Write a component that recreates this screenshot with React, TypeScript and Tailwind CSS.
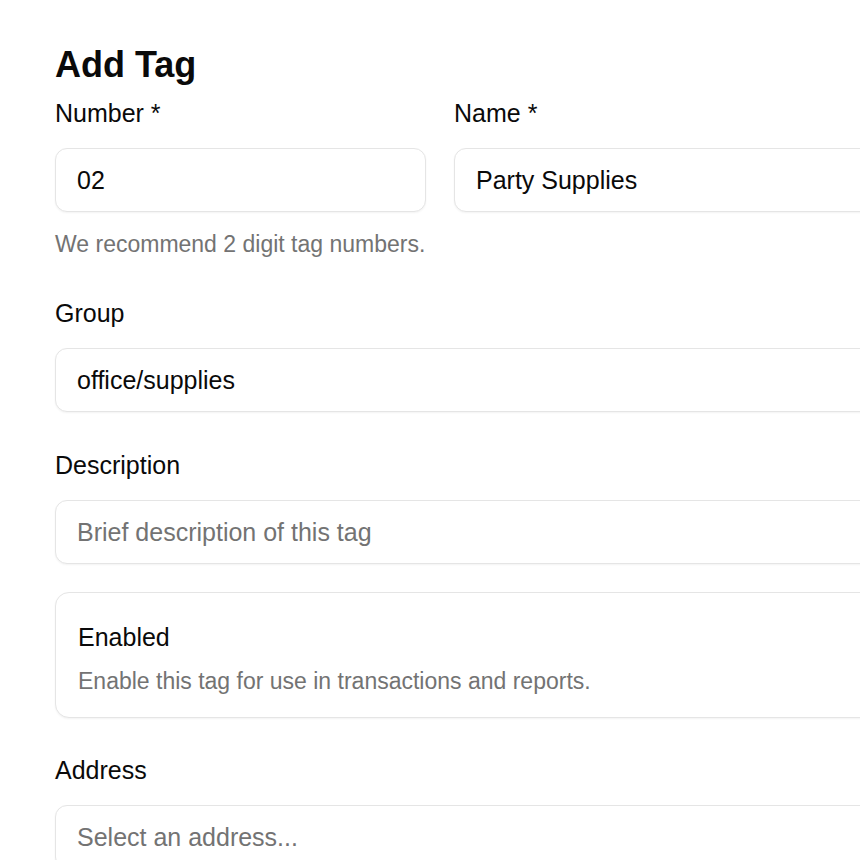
import React from "react";

const font = { fontFamily: '"Liberation Sans", Arial, sans-serif' };

const inputCls =
  "block w-full h-[64px] rounded-[12px] border border-[#e5e5e5] bg-white px-[21px] text-[25px] text-[#0a0a0a] placeholder:text-[#737373] shadow-[0_1px_2px_rgba(0,0,0,0.05)] outline-none";

function Label({ children }: { children: React.ReactNode }) {
  return <label className="block text-[25px] leading-[32px] text-[#0a0a0a]">{children}</label>;
}

export default function App() {
  return (
    <div className="w-[860px] h-[860px] overflow-hidden bg-white" style={font}>
      <div className="w-[1300px] pl-[55px] pt-[45px] flex flex-col">
        <h1 className="text-[36px] leading-[40px] font-bold text-[#0a0a0a]">Add Tag</h1>

        <div className="mt-[12px] grid grid-cols-[371px_1fr] gap-x-[28px]">
          <div>
            <Label>Number *</Label>
            <div className="mt-[19px]">
              <input className={inputCls} defaultValue="02" />
            </div>
            <p className="mt-[18px] text-[23px] leading-[28px] text-[#737373]">
              We recommend 2 digit tag numbers.
            </p>
          </div>
          <div>
            <Label>Name *</Label>
            <div className="mt-[19px]">
              <input className={inputCls} defaultValue="Party Supplies" />
            </div>
          </div>
        </div>

        <div className="mt-[39px]">
          <Label>Group</Label>
          <div className="mt-[19px]">
            <input className={inputCls} defaultValue="office/supplies" />
          </div>
        </div>

        <div className="mt-[37px]">
          <Label>Description</Label>
          <div className="mt-[19px]">
            <input className={inputCls} placeholder="Brief description of this tag" />
          </div>
        </div>

        <div className="mt-[28px] rounded-[14px] border border-[#e5e5e5] bg-white px-[22px] pt-[28px] pb-[22px] shadow-[0_1px_2px_rgba(0,0,0,0.05)]">
          <div className="text-[25px] leading-[32px] text-[#0a0a0a]">Enabled</div>
          <div className="mt-[14px] text-[23px] leading-[28px] text-[#737373]">
            Enable this tag for use in transactions and reports.
          </div>
        </div>

        <div className="mt-[36px]">
          <Label>Address</Label>
          <div className="mt-[19px]">
            <input className={inputCls} placeholder="Select an address..." />
          </div>
        </div>
      </div>
    </div>
  );
}
